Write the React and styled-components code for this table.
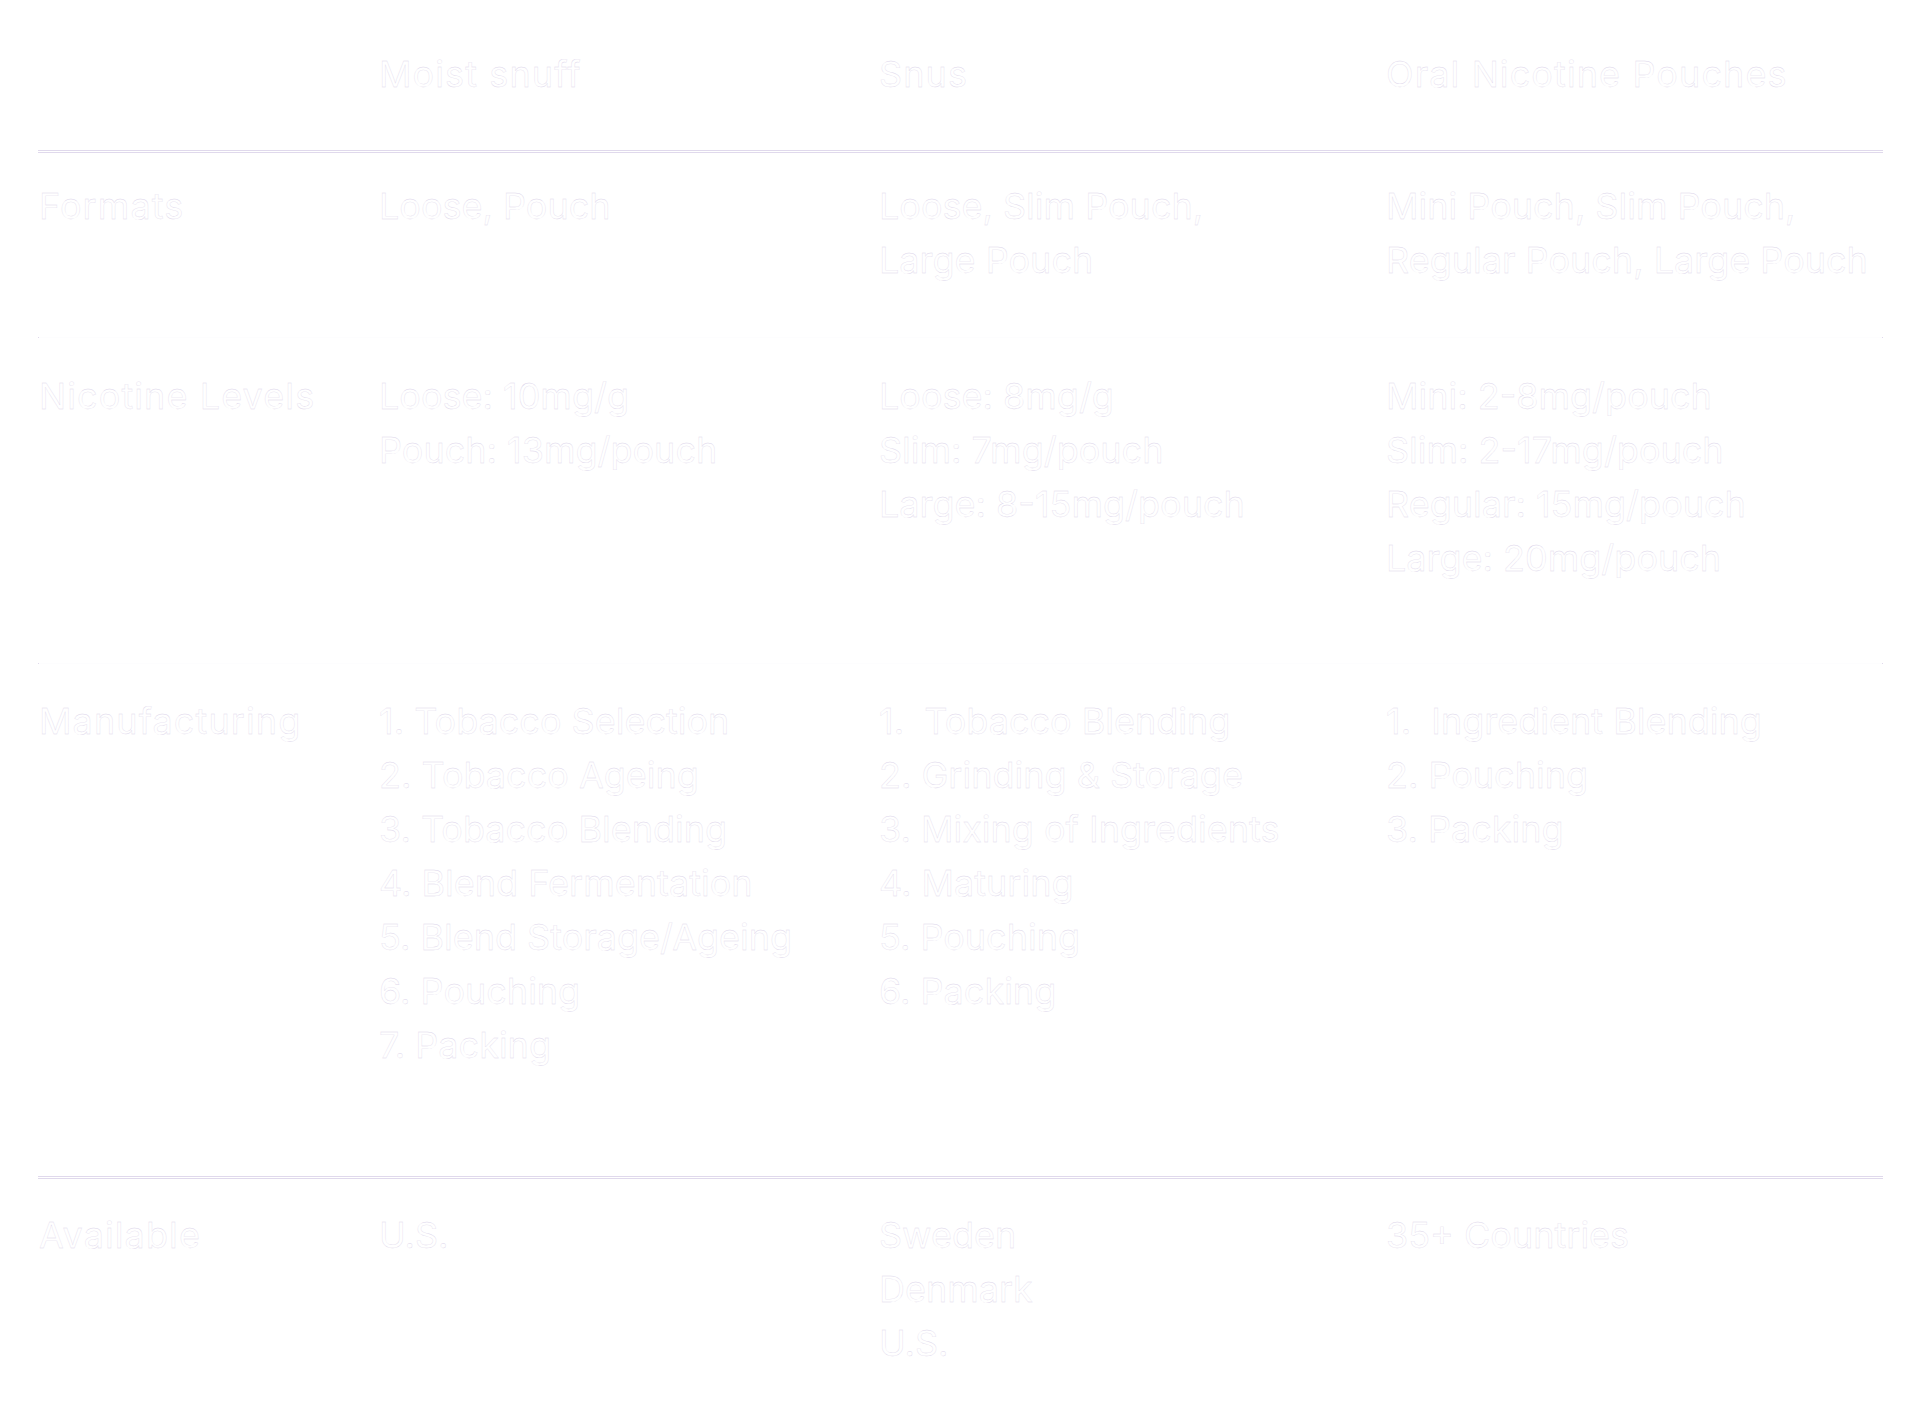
import React from 'react';
import styled, { createGlobalStyle } from 'styled-components';

const colors = {
  page: '#ffffff',
  text: '#ffffff',
  edge: '#dcd5ea', // faint lavender fringe round the white text
  rule: '#e0d9ec',
};

const GlobalStyle = createGlobalStyle`
  html, body {
    margin: 0;
    padding: 0;
    background: ${colors.page};
  }
  body {
    font-family: Inter, 'Liberation Sans', Arial, sans-serif;
  }
`;

const Wrapper = styled.div`
  padding: 0 40px 0 38px;
  color: ${colors.text};
  font-size: 36px;
  line-height: 54px;
  -webkit-text-stroke: 0.3px ${colors.edge};
`;

const Row = styled.div`
  display: grid;
  grid-template-columns: 341px 500px 507px 1fr;
  padding-top: ${(p) => p.$top}px;
  padding-bottom: ${(p) => p.$bottom}px;
`;

const Label = styled.div`
  padding-left: 1px;
  letter-spacing: 1.1px;
`;

const Cell = styled.div`
  display: flex;
  flex-direction: column;
`;

const HeadCell = styled(Cell)`
  letter-spacing: 1.1px;
`;

const Line = styled.span`
  white-space: pre;
`;

// Thick rule under the header and before "Available"
const Rule = styled.div`
  height: 1px;
  background: ${colors.page};
  border-top: 1px solid ${colors.rule};
  border-bottom: 1px solid ${colors.rule};
`;

// Almost invisible row separator, only the ends show
const Separator = styled.div`
  height: 1px;
  background: #fdfdfe;
  border-left: 1px solid ${colors.rule};
  border-right: 1px solid ${colors.rule};
`;

const columns = ['Moist snuff', 'Snus', 'Oral Nicotine Pouches'];

const rows = [
  {
    label: 'Formats',
    top: 26,
    bottom: 50,
    cells: [
      ['Loose, Pouch'],
      ['Loose, Slim Pouch,', 'Large Pouch'],
      ['Mini Pouch, Slim Pouch,', 'Regular Pouch, Large Pouch'],
    ],
  },
  {
    label: 'Nicotine Levels',
    top: 31,
    bottom: 78,
    cells: [
      ['Loose: 10mg/g', 'Pouch: 13mg/pouch'],
      ['Loose: 8mg/g', 'Slim: 7mg/pouch', 'Large: 8-15mg/pouch'],
      ['Mini: 2-8mg/pouch', 'Slim: 2-17mg/pouch', 'Regular: 15mg/pouch', 'Large: 20mg/pouch'],
    ],
  },
  {
    label: 'Manufacturing',
    top: 30,
    bottom: 104,
    cells: [
      [
        '1. Tobacco Selection',
        '2. Tobacco Ageing',
        '3. Tobacco Blending',
        '4. Blend Fermentation',
        '5. Blend Storage/Ageing',
        '6. Pouching',
        '7. Packing',
      ],
      [
        '1.  Tobacco Blending',
        '2. Grinding & Storage',
        '3. Mixing of Ingredients',
        '4. Maturing',
        '5. Pouching',
        '6. Packing',
      ],
      ['1.  Ingredient Blending', '2. Pouching', '3. Packing'],
    ],
  },
];

const available = {
  label: 'Available',
  cells: [['U.S.'], ['Sweden', 'Denmark', 'U.S.'], ['35+ Countries']],
};

function TableRow({ row, top, bottom }) {
  return (
    <Row $top={top} $bottom={bottom}>
      <Label>{row.label}</Label>
      {row.cells.map((lines, i) => (
        <Cell key={i}>
          {lines.map((l) => (
            <Line key={l}>{l}</Line>
          ))}
        </Cell>
      ))}
    </Row>
  );
}

export default function App() {
  return (
    <>
      <GlobalStyle />
      <Wrapper>
        <Row $top={47} $bottom={49}>
          <Label />
          {columns.map((c) => (
            <HeadCell key={c}>{c}</HeadCell>
          ))}
        </Row>
        <Rule />

        {rows.map((row, i) => (
          <React.Fragment key={row.label}>
            <TableRow row={row} top={row.top} bottom={row.bottom} />
            {i < rows.length - 1 && <Separator />}
          </React.Fragment>
        ))}

        <Rule />
        <TableRow row={available} top={29} bottom={34} />
      </Wrapper>
    </>
  );
}
